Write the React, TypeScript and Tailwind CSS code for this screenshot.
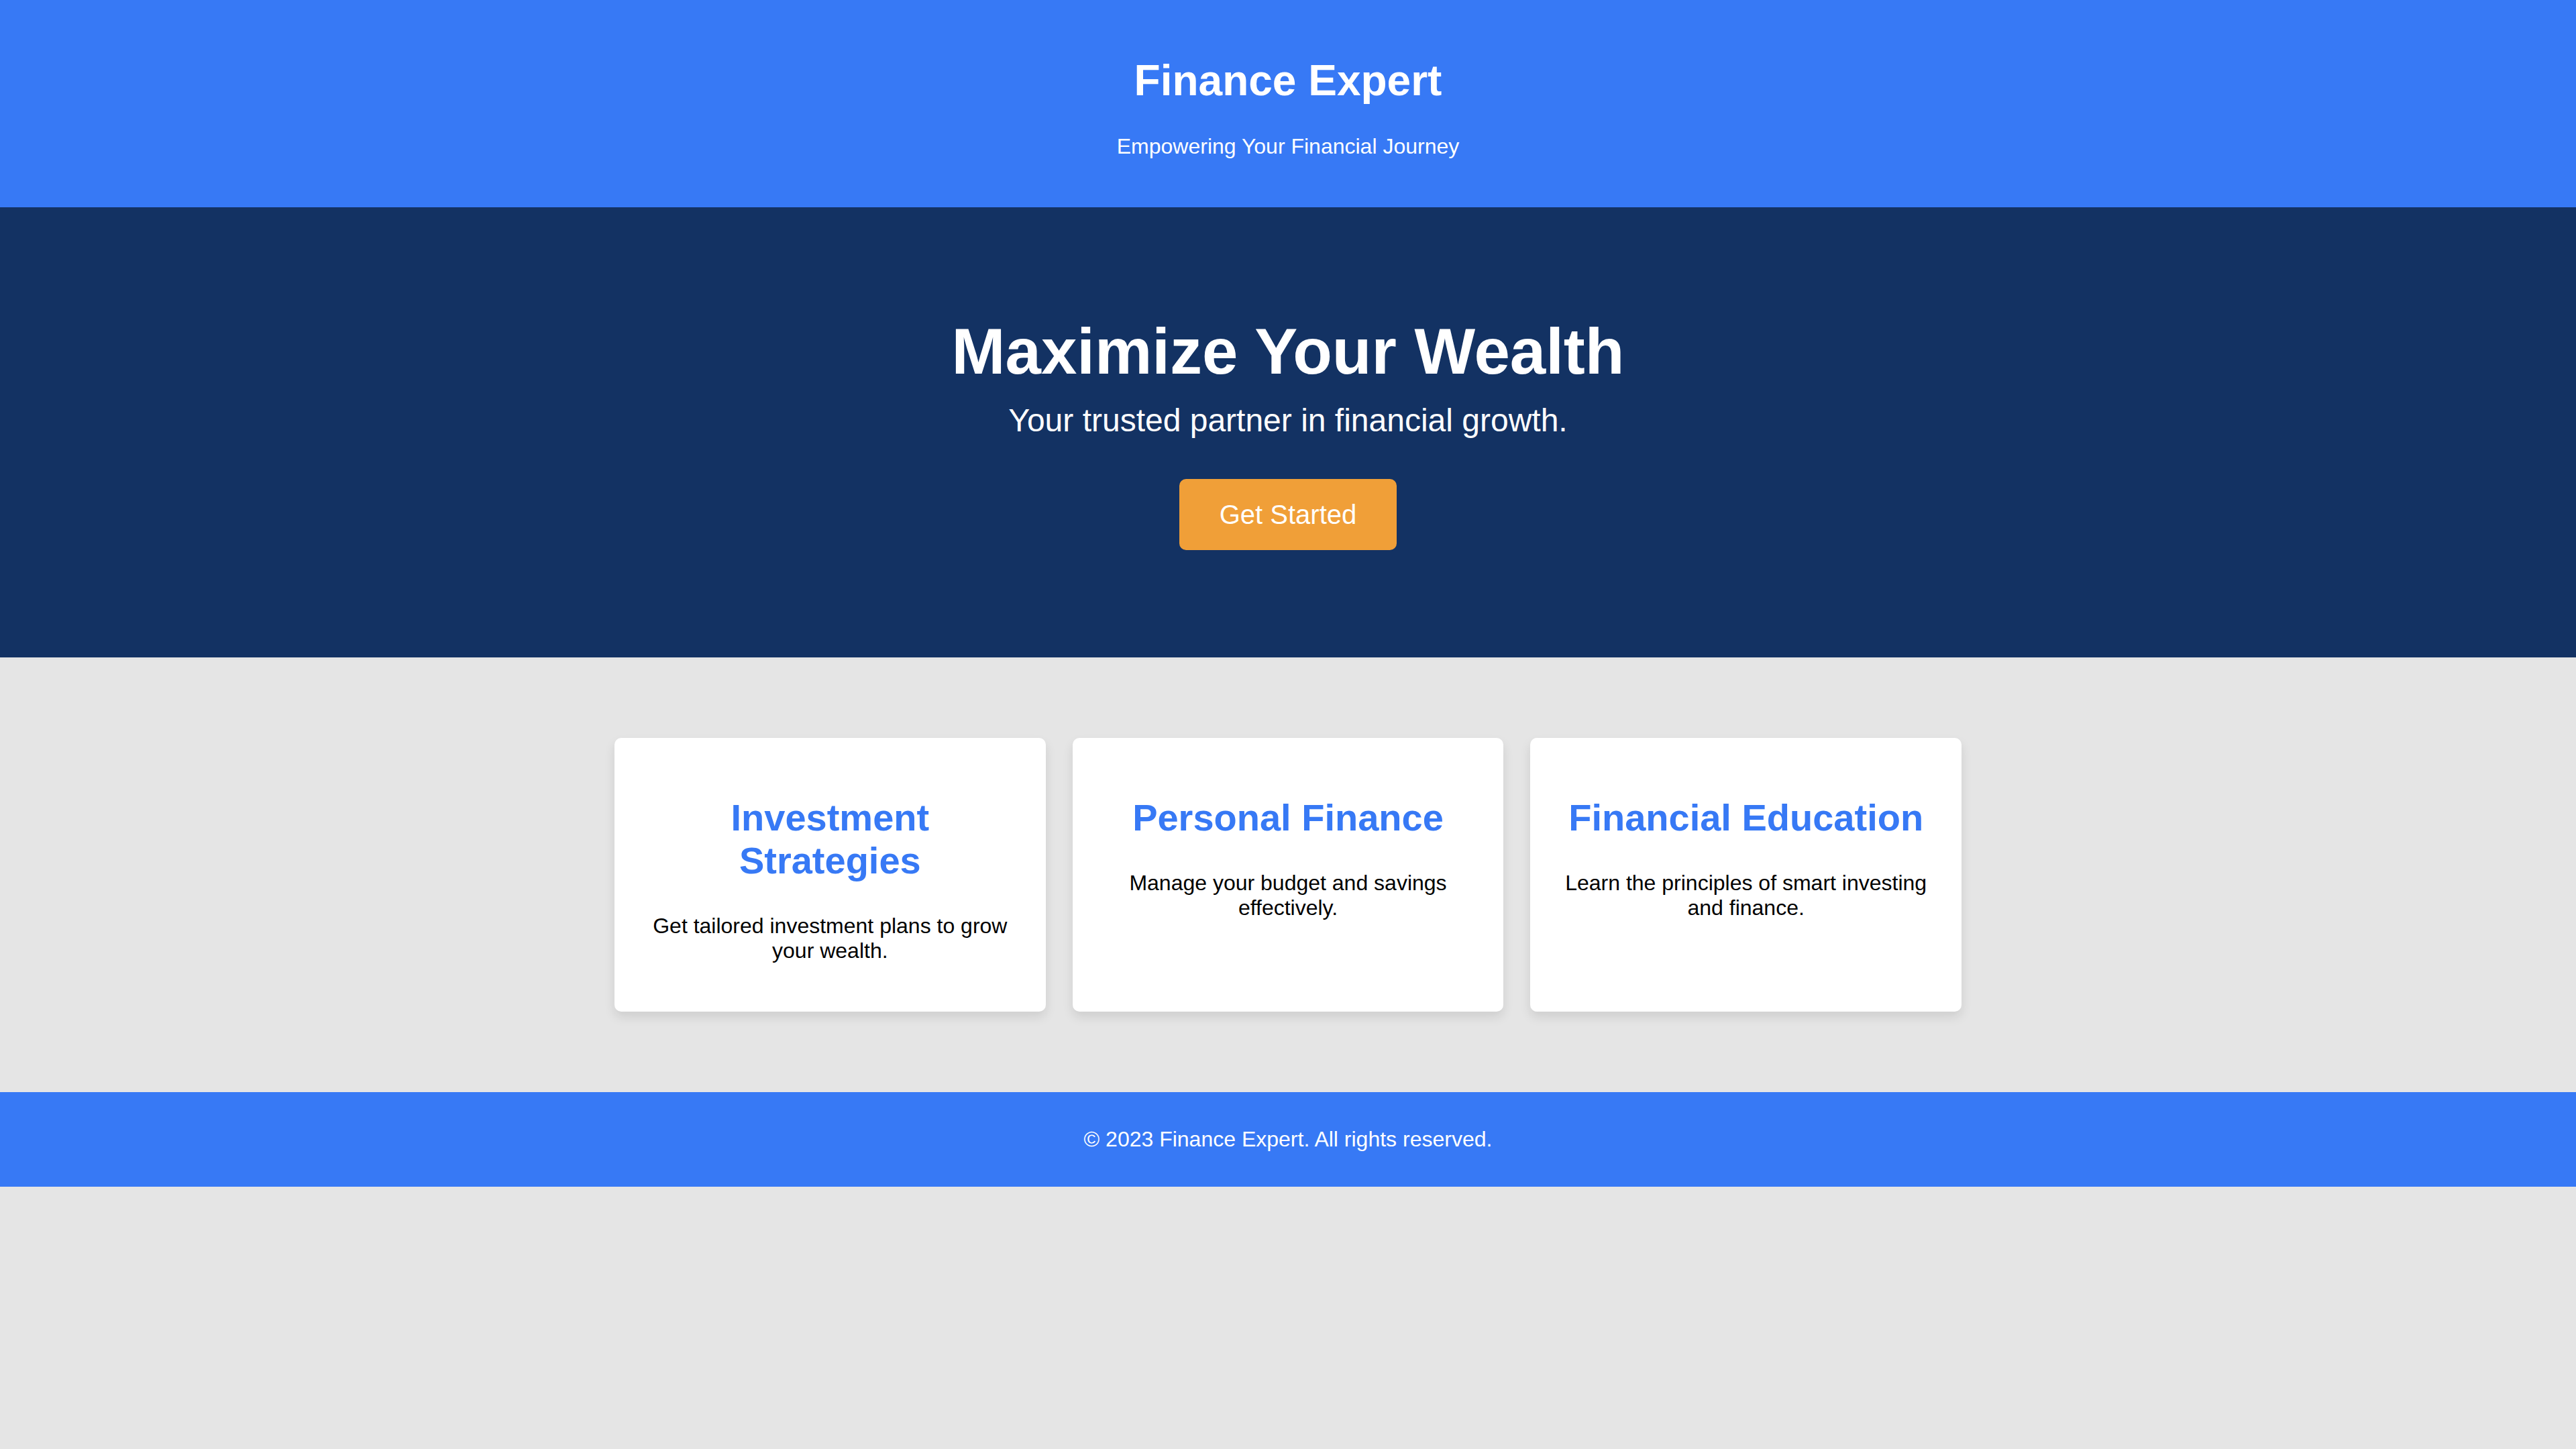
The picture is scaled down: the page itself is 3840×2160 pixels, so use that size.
import React from 'react';

const services = [
  {
    title: 'Investment Strategies',
    text: 'Get tailored investment plans to grow your wealth.',
  },
  {
    title: 'Personal Finance',
    text: 'Manage your budget and savings effectively.',
  },
  {
    title: 'Financial Education',
    text: 'Learn the principles of smart investing and finance.',
  },
];

function ServiceCard({ title, text }: { title: string; text: string }) {
  return (
    <div className="bg-white rounded-[10px] shadow-[0_8px_16px_rgba(0,0,0,0.1)] px-[40px] pt-[87px] pb-[72px]">
      <h3 className="text-[56px] leading-[64px] font-bold text-[#3779f5]">{title}</h3>
      <p className="mt-[47px] text-[32px] leading-[37px] text-black">{text}</p>
    </div>
  );
}

export default function App() {
  return (
    <div className="min-h-screen bg-[#e5e5e5] text-center font-['Liberation_Sans',Arial,sans-serif]">
      <header className="bg-[#3779f5] text-white pt-[84px] pb-[72px]">
        <h1 className="text-[64px] leading-[72px] font-bold mb-[44px]">Finance Expert</h1>
        <p className="text-[32px] leading-[37px]">Empowering Your Financial Journey</p>
      </header>

      <section className="bg-[#133263] text-white py-[160px] flex flex-col items-center">
        <h2 className="text-[96px] leading-[110px] font-bold">Maximize Your Wealth</h2>
        <p className="mt-[20px] text-[48px] leading-[55px]">Your trusted partner in financial growth.</p>
        <button className="mt-[60px] bg-[#f09f38] text-white text-[40px] leading-[46px] px-[60px] py-[30px] rounded-[10px]">
          Get Started
        </button>
      </section>

      <section className="py-[120px]">
        <div className="max-w-[2008px] mx-auto grid grid-cols-3 gap-[40px]">
          {services.map((s) => (
            <ServiceCard key={s.title} title={s.title} text={s.text} />
          ))}
        </div>
      </section>

      <footer className="bg-[#3779f5] text-white py-[52px]">
        <p className="text-[32px] leading-[37px]">© 2023 Finance Expert. All rights reserved.</p>
      </footer>
    </div>
  );
}
